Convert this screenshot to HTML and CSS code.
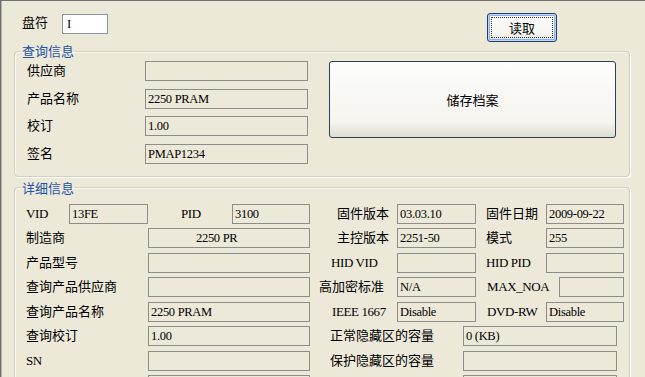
FILE: index.html
```html
<!DOCTYPE html>
<html lang="zh-CN">
<head>
    <meta charset="UTF-8">
    <meta name="viewport" content="width=device-width, initial-scale=1.0">
    <title>盘符信息</title>
    <link rel="stylesheet" href="styles.css">
</head>
<body>
    <div class="window">
        <div class="topbar">
            <span class="drive-label">盘符</span>
            <div class="drive-box">I</div>
            <button class="read-button">读取</button>
        </div>

        <fieldset class="group query-group">
            <legend>查询信息</legend>
            <div class="query-body">
                <div class="query-rows">
                    <div class="query-row"><span class="label">供应商</span><div class="field"></div></div>
                    <div class="query-row"><span class="label">产品名称</span><div class="field">2250 PRAM</div></div>
                    <div class="query-row"><span class="label">校订</span><div class="field">1.00</div></div>
                    <div class="query-row"><span class="label">签名</span><div class="field">PMAP1234</div></div>
                </div>
                <button class="save-button">储存档案</button>
            </div>
        </fieldset>

        <fieldset class="group detail-group">
            <legend>详细信息</legend>
            <div class="detail-grid">
                <!-- row 1 -->
                <div class="id-pair">
                    <span class="label latin id-label">VID</span>
                    <div class="field id-field">13FE</div>
                    <span class="label latin pid-label">PID</span>
                    <div class="field pid-field">3100</div>
                </div>
                <span class="label col-b indent">固件版本</span>
                <div class="field col-b-field">03.03.10</div>
                <span class="label col-c">固件日期</span>
                <div class="field col-c-field">2009-09-22</div>

                <!-- row 2 -->
                <span class="label col-a">制造商</span>
                <div class="field col-a-field maker">2250 PR</div>
                <span class="label col-b indent">主控版本</span>
                <div class="field col-b-field">2251-50</div>
                <span class="label col-c">模式</span>
                <div class="field col-c-field">255</div>

                <!-- row 3 -->
                <span class="label col-a">产品型号</span>
                <div class="field col-a-field"></div>
                <span class="label latin col-b nudge">HID VID</span>
                <div class="field col-b-field"></div>
                <span class="label latin col-c">HID PID</span>
                <div class="field col-c-field"></div>

                <!-- row 4 -->
                <span class="label col-a">查询产品供应商</span>
                <div class="field col-a-field"></div>
                <span class="label col-b outdent">高加密标准</span>
                <div class="field col-b-field">N/A</div>
                <span class="label latin col-c nudge">MAX_NOA</span>
                <div class="field col-c-field short">&nbsp;</div>

                <!-- row 5 -->
                <span class="label col-a">查询产品名称</span>
                <div class="field col-a-field">2250 PRAM</div>
                <span class="label latin col-b nudge2">IEEE 1667</span>
                <div class="field col-b-field">Disable</div>
                <span class="label latin col-c nudge">DVD-RW</span>
                <div class="field col-c-field">Disable</div>

                <!-- row 6 -->
                <span class="label col-a">查询校订</span>
                <div class="field col-a-field">1.00</div>
                <div class="wide-right">
                    <span class="label wide-label">正常隐藏区的容量</span>
                    <div class="field wide-field">0 (KB)</div>
                </div>

                <!-- row 7 -->
                <span class="label latin col-a">SN</span>
                <div class="field col-a-field"></div>
                <div class="wide-right">
                    <span class="label wide-label">保护隐藏区的容量</span>
                    <div class="field wide-field"></div>
                </div>

                <!-- row 8 -->
                <span class="label col-a"></span>
                <div class="field col-a-field"></div>
                <div class="wide-right">
                    <span class="label wide-label"></span>
                    <div class="field wide-field"></div>
                </div>
            </div>
        </fieldset>
    </div>
</body>
</html>
```

FILE: styles.css
```css
body {
    margin: 0;
    padding: 0;
    font-family: "Liberation Serif", "Noto Sans CJK SC", serif;
    font-size: 13px;
    color: #000000;
    background-color: #ece9d8;
}
.window {
    width: 645px;
    height: 377px;
    box-sizing: border-box;
    border-top: 1px solid #727272;
    border-left: 1px solid #6c6c6c;
    box-shadow: inset 1px 0 0 #b8b6a9;
    padding-left: 13px;
    overflow: hidden;
    background-color: #ece9d8;
}

/* top bar */
.topbar {
    display: flex;
    align-items: flex-start;
    height: 43px;
    box-sizing: border-box;
    padding-top: 12px;
    padding-left: 8px;
}
.drive-label {
    line-height: 18px;
    margin-top: 1px;
}
.drive-box {
    margin-left: 14px;
    margin-top: 1px;
    width: 46px;
    height: 20px;
    box-sizing: border-box;
    background-color: #ffffff;
    border: 1px solid #8a97a6;
    padding-left: 4px;
    font-size: 12.5px;
    line-height: 18px;
}
.read-button {
    margin-left: auto;
    margin-right: 88px;
    width: 70px;
    height: 29px;
    font-family: "Noto Sans CJK SC", sans-serif;
    font-size: 13px;
    color: #000000;
    border: 1px solid #1f3f6e;
    border-radius: 3px;
    background: linear-gradient(#fefefe, #f5f5f1 70%, #e2e1d7);
    box-shadow: inset 0 0 0 1px #c4d4f3, inset 0 0 0 2px #8fb0e6;
    outline: 1px dotted #333333;
    outline-offset: -5px;
    padding: 0;
    cursor: pointer;
}

/* group boxes */
.group {
    margin: 0;
    width: 616px;
    box-sizing: border-box;
    min-width: 0;
    border: 1px solid #d3d0bf;
    border-radius: 4px;
    box-shadow: 1px 1px 0 #ffffff, inset 1px 1px 0 #f8f7f2;
}
.group legend {
    color: #1f52a8;
    font-family: "Noto Sans CJK SC", sans-serif;
    font-size: 13px;
    line-height: 14px;
    padding: 0 1px;
}
.query-group {
    padding: 3px 13px 12px 12px;
}
.query-group legend {
    margin-left: -6px;
}
.detail-group {
    margin-top: 4px;
    padding: 9px 5px 0 11px;
    height: 240px;
}
.detail-group legend {
    margin-left: -5px;
}

.label {
    line-height: 20px;
    white-space: nowrap;
}
.latin {
    letter-spacing: -0.4px;
}
.field {
    height: 20px;
    box-sizing: border-box;
    border: 1px solid #8c8c88;
    padding-left: 2px;
    font-size: 12.5px;
    line-height: 18px;
    letter-spacing: -0.3px;
    white-space: nowrap;
    overflow: hidden;
}

/* query group */
.query-body {
    display: flex;
    align-items: flex-start;
}
.query-rows {
    display: flex;
    flex-direction: column;
    gap: 7.5px;
}
.query-row {
    display: flex;
    height: 20px;
}
.query-row .label {
    width: 118px;
}
.query-row .field {
    width: 163px;
}
.save-button {
    margin-left: 21px;
    width: 287px;
    height: 77px;
    font-family: "Noto Sans CJK SC", sans-serif;
    font-size: 13px;
    color: #000000;
    border: 1px solid #2b3f55;
    border-radius: 3px;
    background: linear-gradient(#fdfdfc, #f5f4ef 80%, #dedcd2);
    padding: 0;
    cursor: pointer;
}

/* detail group */
.detail-grid {
    display: grid;
    grid-template-columns: 122px 162px 20px 67px 79px 10px 60px 78px;
    grid-auto-rows: 20px;
    row-gap: 4.5px;
}
.col-a { grid-column: 1; }
.col-a-field { grid-column: 2; }
.col-b { grid-column: 4; }
.col-b-field { grid-column: 5; }
.col-c { grid-column: 7; }
.col-c-field { grid-column: 8; }

.indent { padding-left: 7px; }
.outdent { margin-left: -11px; }
.nudge { padding-left: 1px; }
.nudge2 { padding-left: 2px; }
.short {
    width: 65px;
    justify-self: end;
}
.maker {
    padding-left: 47px;
}

.id-pair {
    grid-column: 1 / 3;
    display: flex;
}
.id-label {
    width: 43px;
}
.id-field {
    width: 79px;
}
.pid-label {
    width: 51px;
    padding-left: 33px;
}
.pid-field {
    width: 78px;
}

.wide-right {
    grid-column: 4 / 9;
    display: flex;
}
.wide-label {
    width: 133px;
}
.wide-field {
    width: 154px;
}
```
